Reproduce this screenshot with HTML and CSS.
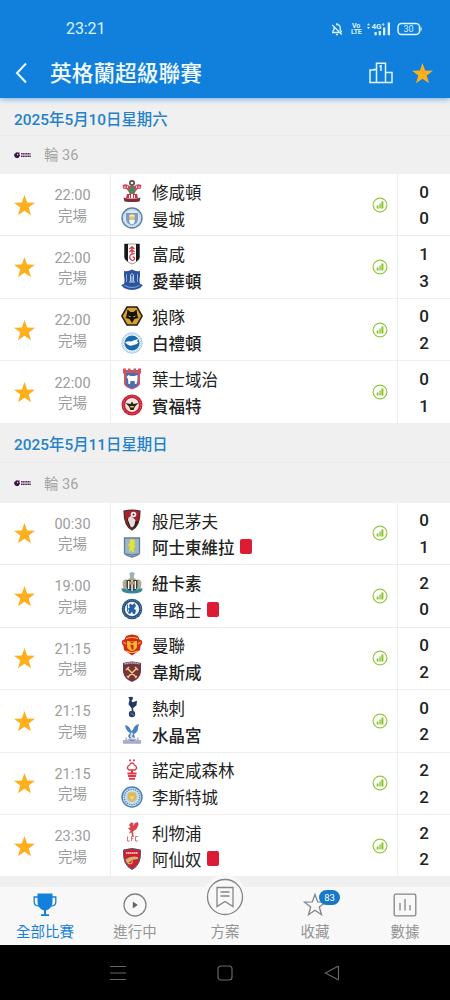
FILE: index.html
```html
<!DOCTYPE html>
<html lang="zh-Hant">
<head>
    <meta charset="utf-8">
    <meta name="viewport" content="width=device-width, initial-scale=1">
    <title>英格蘭超級聯賽</title>
    <link rel="stylesheet" href="styles.css">
</head>
<body>
    <svg class="defs">
        <symbol id="star" viewBox="0 0 20 20">
            <path d="M10 0l2.5 7.1 7.5.2-6 4.6 2.2 7.4L10 15l-6.2 4.3L6 11.9 0 7.300l7.500-.2z"/>
        </symbol>
        <symbol id="stats" viewBox="0 0 16 16">
            <circle cx="8" cy="8" r="6.900" fill="none" stroke="#92c83e" stroke-width="1.200"/>
            <path d="M4.700 8.600h1.800v3H4.700zM7.400 6.600h1.300v5H7.400zM9.400 4.400h2v7.200h-2z" fill="#84c225"/>
        </symbol>
        <symbol id="league" viewBox="0 0 18 8">
            <path d="M3 1l1 .8 1.600-.6-.3 1.600.7 2L4.300 7 2 7.100.4 5.600.1 3.300 1.800 2z" fill="#3d1149"/>
            <circle cx="3.500" cy="3.600" r=".8" fill="#c9b5cf"/>
            <path d="M7 2.700h9.500M7 5.200h10" stroke="#5b3066" stroke-width="1.500" stroke-dasharray="1.400 .3"/>
        </symbol>
    </svg>

    <div class="header">
        <div class="status-bar">
            <span class="clock">23:21</span>
            <div class="status-icons">
                <svg width="12" height="14" viewBox="0 0 12 14" fill="none" stroke="#d9f3ff" stroke-width="1.300">
                    <path d="M1 10.500h9.500M2 10V9l1-1.500V5.500M5 2.800q4-.8 4.200 3V8l1.500 2M5 12.700h2M6 1v1.500M1.200 3l9.600 9.500"/>
                </svg>
                <span class="volte">Vo<br>LTE</span>
                <svg width="24" height="14" viewBox="0 0 24 14" fill="#d9f3ff">
                    <path d="M0 3.300l1.500-2 1.500 2zM0 5l1.500 2L3 5zM7.500 10h2.200v3.300H7.500zM11.700 9h2.200v4.300h-2.200zM16 5.500h2.300v7.800H16zM20.700.5H23v12.800h-2.300z"/>
                    <text x="4.500" y="7.300" class="signal-text">4G⁺</text>
                </svg>
                <svg width="26" height="14" viewBox="0 0 26 14">
                    <rect x="1" y="1.500" width="21.500" height="11" rx="3.500" fill="none" stroke="#d9f3ff" stroke-width="1.500"/>
                    <path d="M23.500 4q2.500 3 0 6z" fill="#d9f3ff"/>
                    <text x="6.500" y="10.200" class="battery-text">30</text>
                </svg>
            </div>
        </div>
        <div class="title-bar">
            <svg class="back" width="12" height="22" viewBox="0 0 12 22" fill="none" stroke="#e9f8ff" stroke-width="2">
                <path d="M11 1.500L2 11l9 9.500"/>
            </svg>
            <h1>英格蘭超級聯賽</h1>
            <svg class="podium" width="24" height="22" viewBox="0 0 24 22" fill="none" stroke="#e2f5ff" stroke-width="1.500">
                <path d="M7.500 20.500V1.200h9v19.300M7.500 7.500H5V8H1v12.500h22V10.500h-6.500M10.500 4.500L12 3.800V9"/>
            </svg>
            <svg class="star"><use href="#star"/></svg>
        </div>
    </div>

    <div class="matches">
        <div class="date first">2025年5月10日星期六</div>
        <div class="round"><svg class="league"><use href="#league"/></svg><span>輪 36</span></div>

        <div class="match">
            <div class="fav"><svg class="star"><use href="#star"/></svg></div>
            <div class="time">22:00<br>完場</div>
            <div class="teams">
                <div class="team">
                    <svg class="crest" viewBox="0 0 22 22">
                        <circle cx="11" cy="3" r="3" fill="#5d4c40"/><circle cx="11" cy="3" r="1.300" fill="#eee"/>
                        <path d="M1.500 5q4-2 7 1h5q3-3 7-1l-1 4q-3-1-5 2l-1 3H8.500l-1-3q-2-3-5-2z" fill="#d6455a"/>
                        <path d="M4 6v2M6.500 6v2M15.500 6v2M18 6v2" stroke="#f6dfe2"/>
                        <path d="M7.500 7h7l-2 3.500h3.500l-3.500 2V14h-3v-1.500L6 10.500h3.500z" fill="#37935a"/>
                        <path d="M6 14h10l1 4.500H5z" fill="#d72c40"/><path d="M10 14h2v4h-2zM8 15h1v3H8zM13 15h1v3h-1z" fill="#fff"/>
                        <path d="M2.500 17.500q8.500 3 17 0l-1 4q-7.500 1-15 0z" fill="#713238"/>
                    </svg>
                    <span>修咸頓</span>
                </div>
                <div class="team">
                    <svg class="crest" viewBox="0 0 22 22">
                        <circle cx="11" cy="11" r="10" fill="#dce8ef" stroke="#547fa6" stroke-width="1.400"/>
                        <circle cx="11" cy="11" r="8.300" fill="none" stroke="#a4bfd6" stroke-dasharray="1 1"/>
                        <path d="M5 6h12v6q0 5-6 6.500-6-1.500-6-6.500z" fill="#7a9ec9"/>
                        <path d="M8 13q3-2 6 0l-1 3.500-2 1-2-1z" fill="#f3f6f7"/>
                        <circle cx="11" cy="10" r="3" fill="#e3c36a"/><path d="M8.500 8h5v1.500h-5z" fill="#f2eccf"/>
                    </svg>
                    <span>曼城</span>
                </div>
            </div>
            <svg class="stats"><use href="#stats"/></svg>
            <div class="score">0<br>0</div>
        </div>

        <div class="match">
            <div class="fav"><svg class="star"><use href="#star"/></svg></div>
            <div class="time">22:00<br>完場</div>
            <div class="teams">
                <div class="team">
                    <svg class="crest" viewBox="0 0 22 22">
                        <path d="M3.500 1h15v13q0 4-7.500 7-7.500-3-7.500-7z" fill="#fff" stroke="#555" stroke-width=".6"/>
                        <path d="M3.500 1h3.500v17.500q-3.500-2-3.500-4.500zM15 1h3.500v13q0 2.500-3.500 4.500z" fill="#171717"/>
                        <path d="M8.300 6L11 3.800 13.500 6M8.300 9L11 6.800 13.500 9M11 4v7M13.700 10.500q-5 .5-5 3.500t3 3.500q2-.5 2-2.500l-2-1.500" fill="none" stroke="#d8303e" stroke-width="1.200"/>
                    </svg>
                    <span>富咸</span>
                </div>
                <div class="team winner">
                    <svg class="crest" viewBox="0 0 22 22">
                        <path d="M3 2q4 1 8-1.500Q15 3 19 2v5q-1 4 0 8l3 1-3 3q-8 4-16 0l-3-3 3-1q1-4 0-8z" fill="#2c549d"/>
                        <path d="M9.500 6L11 4.500 12.500 6v6h-3zM8 13h6M9.500 8h3M9.500 10h3" fill="none" stroke="#cddcf0" stroke-width=".9"/>
                        <path d="M5.500 5v8M16.500 5v8M3.500 16.500q7.500 4 15 0" fill="none" stroke="#86a8da" stroke-width="1"/>
                    </svg>
                    <span>愛華頓</span>
                </div>
            </div>
            <svg class="stats"><use href="#stats"/></svg>
            <div class="score">1<br>3</div>
        </div>

        <div class="match">
            <div class="fav"><svg class="star"><use href="#star"/></svg></div>
            <div class="time">22:00<br>完場</div>
            <div class="teams">
                <div class="team">
                    <svg class="crest" viewBox="0 0 22 22">
                        <path d="M6 2h10l5.200 9L16 20H6L.8 11z" fill="#d8a22d" stroke="#241c16" stroke-width="1.500"/>
                        <path d="M6.500 4.500l3 2.500h3l3-2.500 1 6.500 1 2-4 1-2.500 4L8.500 14l-4-1 1-2z" fill="#17130f"/>
                        <path d="M7 10.500l3 1-1 .8zM15 10.500l-3 1 1 .8z" fill="#f1d16c"/>
                    </svg>
                    <span>狼隊</span>
                </div>
                <div class="team winner">
                    <svg class="crest" viewBox="0 0 22 22">
                        <circle cx="11" cy="11" r="10.200" fill="#f3f9fc" stroke="#a9cce4"/>
                        <circle cx="11" cy="11" r="9" fill="none" stroke="#a6c8e0" stroke-width="1.200" stroke-dasharray="1 .8"/>
                        <circle cx="11" cy="11" r="7.600" fill="#1769b1"/>
                        <path d="M4 10.500q3-2 6-1 4-2 7.500-2.500l-1.500 2 1.500 1.500q-2 2-5 2.500-4 1.500-6-.5z" fill="#fff"/>
                    </svg>
                    <span>白禮頓</span>
                </div>
            </div>
            <svg class="stats"><use href="#stats"/></svg>
            <div class="score">0<br>2</div>
        </div>

        <div class="match">
            <div class="fav"><svg class="star"><use href="#star"/></svg></div>
            <div class="time">22:00<br>完場</div>
            <div class="teams">
                <div class="team">
                    <svg class="crest" viewBox="0 0 22 22">
                        <path d="M2 .5h3v1.500h2V.5h2.500V2h3V.5H15V2h2V.5h3v4.500l-1 1v10q-1 3-8 5.500-7-2.500-8-5.500V6L2 5z" fill="#d35264"/>
                        <path d="M5 5h12v11q-1 3-6 4-5-1-6-4z" fill="#4570b4"/>
                        <path d="M5.500 9l2-2 2 1h4l3-1v5l-1 4H14l-.5-3h-4L9 16H7.500L7 11z" fill="#fff"/>
                    </svg>
                    <span>葉士域治</span>
                </div>
                <div class="team winner">
                    <svg class="crest" viewBox="0 0 22 22">
                        <circle cx="11" cy="11" r="8.700" fill="#efe7df" stroke="#c81f32" stroke-width="3.600"/>
                        <circle cx="11" cy="11" r="8.800" fill="none" stroke="#dd8790" stroke-width=".9" stroke-dasharray="1 1"/>
                        <path d="M4.500 9l5 1L11 7.500l1.500 2.500 5-1-3.500 3.500-1.500 3.500h-3L8 12.500z" fill="#24201d"/>
                        <path d="M9 12h4l-.5 1.500h-3z" fill="#f3c63e"/>
                    </svg>
                    <span>賓福特</span>
                </div>
            </div>
            <svg class="stats"><use href="#stats"/></svg>
            <div class="score">0<br>1</div>
        </div>

        <div class="date">2025年5月11日星期日</div>
        <div class="round"><svg class="league"><use href="#league"/></svg><span>輪 36</span></div>

        <div class="match">
            <div class="fav"><svg class="star"><use href="#star"/></svg></div>
            <div class="time">00:30<br>完場</div>
            <div class="teams">
                <div class="team">
                    <svg class="crest" viewBox="0 0 22 22">
                        <path d="M3 2q8-2 16 0 0 15-8 19Q3 17 3 2z" fill="#a9202c" stroke="#422d2b" stroke-width="1.200"/>
                        <path d="M12 12h5q-1 5-6 8zM6 10l4-2v11q-3-2-4-9z" fill="#241d1e"/>
                        <circle cx="12.500" cy="5.500" r="2.800" fill="#f5eeee"/><circle cx="12.500" cy="5.500" r=".9" fill="#222"/>
                        <path d="M7 11q0-3 3-4l4.500 4-1 5-2 2.500-2-1z" fill="#e5dcdb"/>
                    </svg>
                    <span>般尼茅夫</span>
                </div>
                <div class="team winner">
                    <svg class="crest" viewBox="0 0 22 22">
                        <path d="M3.500 2h15v15.500q-1 2-7.500 3.500-6.500-1.500-7.500-3.500z" fill="#9fb6c4" stroke="#657e9d" stroke-width="1.300"/>
                        <path d="M9 3.500h4l1 3.500-1 2 1.500 1-2 3 1 3h-2l-1-2-1.500 2-1-1 1-4-2-2 2-2z" fill="#e5e52b"/>
                        <path d="M5 18q6 2 12 0" stroke="#526f9d" fill="none"/>
                    </svg>
                    <span>阿士東維拉</span><i class="red-card"></i>
                </div>
            </div>
            <svg class="stats"><use href="#stats"/></svg>
            <div class="score">0<br>1</div>
        </div>

        <div class="match">
            <div class="fav"><svg class="star"><use href="#star"/></svg></div>
            <div class="time">19:00<br>完場</div>
            <div class="teams">
                <div class="team winner">
                    <svg class="crest" viewBox="0 0 22 22">
                        <path d="M8.500 1l2.500-1 3 1-1 2v3H9z" fill="#9db5ae"/>
                        <path d="M1.500 10q2-4 5-2l2-2h5l2 2q3-2 5 2l-1 8h-17z" fill="#b0ab92"/>
                        <path d="M5.500 8h11v7q-1 4-5.500 5.500Q6.500 19 5.500 15z" fill="#3c4347"/>
                        <path d="M7 9h1.300v8H7zM10.300 8h1.500v12h-1.500zM13.600 9H15v8h-1.400z" fill="#f5f5f0"/>
                        <path d="M8.500 9.500h5v3h-5z" fill="#c9966a"/>
                        <path d="M0 16.500q4-.5 5.500 1 5.500 2.500 11 0 1.500-1.500 5.500-1l-2 3.500q-9 3-18 0z" fill="#3387a0"/>
                    </svg>
                    <span>紐卡素</span>
                </div>
                <div class="team">
                    <svg class="crest" viewBox="0 0 22 22">
                        <circle cx="11" cy="11" r="10.300" fill="#234d7c"/>
                        <circle cx="11" cy="11" r="8.900" fill="none" stroke="#a9bfcb" stroke-width=".8" stroke-dasharray="1 1.200"/>
                        <circle cx="11" cy="11" r="7.200" fill="#f1f6fa"/>
                        <path d="M9 5.500l2.500 1.500L13.500 5l1.500 3-2 2.500 2 2-1 3.500h-2l-1-2.500L9 16l-2-1 1-2.500-1-2 2-1-1-1.500z" fill="#2460a8"/>
                        <path d="M6.500 6.500v7" stroke="#2460a8" stroke-width=".9"/>
                    </svg>
                    <span>車路士</span><i class="red-card"></i>
                </div>
            </div>
            <svg class="stats"><use href="#stats"/></svg>
            <div class="score">2<br>0</div>
        </div>

        <div class="match">
            <div class="fav"><svg class="star"><use href="#star"/></svg></div>
            <div class="time">21:15<br>完場</div>
            <div class="teams">
                <div class="team">
                    <svg class="crest" viewBox="0 0 22 22">
                        <path d="M5 2q6-3 12 0l1.500 3.500q3.500.5 2.500 4-2 2-2 6.500l-8 5.500L3 16q0-4.500-2-6.500-1-3.500 2.500-4z" fill="#d1291f"/>
                        <path d="M5 4.500q6-2 12 0M5 17q6 3 12 0M2.500 8l2.500 2M19.500 8L17 10" fill="none" stroke="#f6bd2e" stroke-width="1.200"/>
                        <path d="M6 7h10v6q-1 3-5 4-4-1-5-4z" fill="#f6b72b"/>
                        <path d="M8 7.500h6l-3 2zM9 10.500l3.500.5v4l-1.500 1-1-3z" fill="#c52a1c"/>
                    </svg>
                    <span>曼聯</span>
                </div>
                <div class="team winner">
                    <svg class="crest" viewBox="0 0 22 22">
                        <path d="M2 2q9-3 18 0v9q-1 7-9 10-8-3-9-10z" fill="#76323f"/>
                        <path d="M3.500 2.800q7.500-1.800 15 0" fill="none" stroke="#a7bcd0" stroke-width="1.500" stroke-dasharray="1.500 .5"/>
                        <path d="M6 7l9 9M16 7l-9 9M5 9l3-3M14 6l3 3M6 15l2 2M14 17l2-2" stroke="#eccc79" stroke-width="1.500"/>
                    </svg>
                    <span>韋斯咸</span>
                </div>
            </div>
            <svg class="stats"><use href="#stats"/></svg>
            <div class="score">0<br>2</div>
        </div>

        <div class="match">
            <div class="fav"><svg class="star"><use href="#star"/></svg></div>
            <div class="time">21:15<br>完場</div>
            <div class="teams">
                <div class="team">
                    <svg class="crest" viewBox="0 0 22 22">
                        <path d="M8.500 1l3-.3.500 2-1.500 2 1 1.500 4.500-1.500-.5 4.500-3.500 3 .5 3h-1.500l-.5-3-3-4 1-4-.5-2-1-.5z" fill="#233867"/>
                        <circle cx="11" cy="18" r="3.200" fill="#283e70"/><path d="M9.500 17l3.500 2" stroke="#8794ae" stroke-width=".8"/>
                    </svg>
                    <span>熱刺</span>
                </div>
                <div class="team winner">
                    <svg class="crest" viewBox="0 0 22 22">
                        <path d="M4 2q5 1 6 6l2-1q1-5 6-6l-1 4q0 4-4 6l1 4-3-1-2 2-2-3 2-3Q5 8 4 2z" fill="#4a80bc"/>
                        <path d="M10 9l2 1-1 5-2-1z" fill="#d2e1ee"/>
                        <path d="M2 17h4l2-1.500h6l2 1.500h4v2.500H2zM4.500 14.500H6V20H4.500zM16 14.500h1.500V20H16z" fill="#a9b1c8"/>
                        <path d="M2 20h18M9 17.500h4" stroke="#7a82a5"/>
                    </svg>
                    <span>水晶宮</span>
                </div>
            </div>
            <svg class="stats"><use href="#stats"/></svg>
            <div class="score">0<br>2</div>
        </div>

        <div class="match">
            <div class="fav"><svg class="star"><use href="#star"/></svg></div>
            <div class="time">21:15<br>完場</div>
            <div class="teams">
                <div class="team">
                    <svg class="crest" viewBox="0 0 22 22">
                        <path d="M9 .5v1.800M13 .5v1.800" stroke="#df3745" stroke-width="1.800"/>
                        <path d="M11 4Q9 4 8.700 6 6 7 6.500 9.500L8 11h6l1.500-1.500Q16 7 13.300 6 13 4 11 4z" fill="#fff" stroke="#df3745" stroke-width="1.300"/>
                        <path d="M11 11v4" stroke="#df3745" stroke-width="2"/>
                        <path d="M6.500 14.500h9M7 17h8M8 19.700h6" stroke="#df3745" stroke-width="2"/>
                    </svg>
                    <span>諾定咸森林</span>
                </div>
                <div class="team">
                    <svg class="crest" viewBox="0 0 22 22">
                        <circle cx="11" cy="11" r="10" fill="#d4e3ed" stroke="#4a82b8" stroke-width="1.500"/>
                        <circle cx="11" cy="11" r="7.700" fill="none" stroke="#5c8cbd" stroke-width="1.500" stroke-dasharray="1.300 1"/>
                        <circle cx="11" cy="11" r="5.600" fill="#b8cbd2"/>
                        <path d="M7 6.500l3 .5 1-1 1 1 3-.5v6L13 15l-2 1-2-1-2-2.500z" fill="#ddba53"/>
                        <path d="M9 9.500l2 1 2-1-1 4h-2z" fill="#ecd98a"/>
                    </svg>
                    <span>李斯特城</span>
                </div>
            </div>
            <svg class="stats"><use href="#stats"/></svg>
            <div class="score">2<br>2</div>
        </div>

        <div class="match">
            <div class="fav"><svg class="star"><use href="#star"/></svg></div>
            <div class="time">23:30<br>完場</div>
            <div class="teams">
                <div class="team">
                    <svg class="crest" viewBox="0 0 22 22">
                        <path d="M8 4l2-2.500 2.500.5-.5 3 2-3 3-1 .5 3-2 4-3.500 2.500.5 4.500H11l-.5-3.500-2.500 1 1.500-3L7 7.500 9.500 6z" fill="#d94450"/>
                        <path d="M6.500 15.500V20H9M10.500 20v-4.500h2.500M10.500 17.700h2M17 15.500h-2.500V20H17" fill="none" stroke="#dd6f79"/>
                    </svg>
                    <span>利物浦</span>
                </div>
                <div class="team">
                    <svg class="crest" viewBox="0 0 22 22">
                        <path d="M2.500 2q8.500-3 17 0 1 15-8.500 19.500Q1.500 17 2.500 2z" fill="#ce2033" stroke="#4c5577"/>
                        <path d="M5 5h12" stroke="#f4e8e4" stroke-width="1.700" stroke-dasharray="1.500 .4"/>
                        <path d="M4.500 11.500q5-4 12.500-2.500v2l-6.500 1-1.500 2-3 1z" fill="#d8b367"/>
                        <circle cx="9" cy="13.500" r="2.300" fill="none" stroke="#d8b367" stroke-width="1.100"/>
                    </svg>
                    <span>阿仙奴</span><i class="red-card"></i>
                </div>
            </div>
            <svg class="stats"><use href="#stats"/></svg>
            <div class="score">2<br>2</div>
        </div>
    </div>

    <div class="tab-bar">
        <a class="tab active">
            <svg width="24" height="26" viewBox="0 0 24 26">
                <path d="M4.500 1.500h15v8q0 7-6.500 9v3.800h3V24H8v-1.700h3v-3.800q-6.500-2-6.500-9z" fill="#1480da"/>
                <path d="M5 5H1.200v5q0 4 5 4M19 5h3.800v5q0 4-5 4" fill="none" stroke="#1480da" stroke-width="1.300"/>
            </svg>
            全部比賽
        </a>
        <a class="tab">
            <svg width="24" height="26" viewBox="0 0 24 26">
                <circle cx="12" cy="13" r="11" fill="none" stroke="#858585" stroke-width="1.300"/>
                <path d="M9.800 9.500v7l5-3.500z" fill="#666"/>
            </svg>
            進行中
        </a>
        <a class="tab plan">
            <svg width="44" height="44" viewBox="0 0 44 44" fill="none" stroke="#858585" stroke-width="1.300">
                <circle cx="22" cy="22" r="22" fill="#f8f8f8" stroke="none"/>
                <circle cx="22" cy="22" r="17.500"/>
                <path d="M14 12.500h16v19l-8-5-8 5zM17.500 17h9M17.500 21h9"/>
            </svg>
            方案
        </a>
        <a class="tab">
            <svg width="24" height="26" viewBox="0 0 24 26" fill="none" stroke="#858585" stroke-width="1.300">
                <path d="M12 2.500l2.700 7.400 7.800.3-6.200 4.800 2.200 7.800-6.500-4.500-6.500 4.500 2.200-7.800-6.200-4.800 7.800-.3z"/>
            </svg>
            收藏
            <span class="badge">83</span>
        </a>
        <a class="tab">
            <svg width="24" height="26" viewBox="0 0 24 26" fill="none" stroke="#858585" stroke-width="1.300">
                <rect x="1.200" y="2.200" width="21.600" height="21.600" rx="1.500"/>
                <path d="M7 11v7.500M12 7v11.500M17 13v5.500"/>
            </svg>
            數據
        </a>
    </div>

    <div class="nav-bar">
        <svg width="16" height="16" viewBox="0 0 16 16"><path d="M0 1.500h16M0 8h16M0 14.500h16"/></svg>
        <svg width="16" height="16" viewBox="0 0 16 16"><rect x="1" y="1" width="14" height="14" rx="3"/></svg>
        <svg width="16" height="16" viewBox="0 0 16 16"><path d="M14.500 2v12q0 1-1 .5L1.500 8l12-6.500q1-.5 1 .5z"/></svg>
    </div>
</body>
</html>
```

FILE: styles.css
```css
* {
    box-sizing: border-box;
}

body {
    margin: 0;
    width: 450px;
    height: 1000px;
    display: flex;
    flex-direction: column;
    overflow: hidden;
    background-color: #f0f0f0;
    font-family: Roboto, "Noto Sans CJK TC", sans-serif;
    color: #222;
}

svg {
    display: block;
    flex-shrink: 0;
}

.defs {
    position: absolute;
    width: 0;
    height: 0;
}

/* header */
.header {
    position: relative;
    flex: none;
    height: 98px;
    background-color: #1080dc;
    box-shadow: 0 1px 6px #1080dc99;
}

.status-bar {
    display: flex;
    justify-content: space-between;
    align-items: center;
    height: 48px;
    padding: 10px 27px 0 66px;
    color: #d9f3ff;
}

.clock {
    padding-bottom: 1px;
    font-size: 16px;
    letter-spacing: -0.1px;
}

.status-icons {
    display: flex;
    align-items: center;
}

.volte {
    width: 10px;
    margin: 0 6px 0 8px;
    font-size: 7px;
    line-height: 6.500px;
    font-weight: 700;
    letter-spacing: -0.3px;
    text-align: center;
}

.status-icons svg + svg {
    margin-left: 6px;
}

.signal-text {
    font-size: 8px;
    font-weight: 700;
}

.battery-text {
    font-size: 9px;
    fill: #d9f3ff;
}

.title-bar {
    display: flex;
    align-items: center;
    height: 50px;
    padding: 0 17px 0 15px;
}

.title-bar h1 {
    flex: 1;
    margin: 2px 0 0 23px;
    font-size: 21.700px;
    line-height: 28px;
    font-weight: 500;
    color: #f0faff;
}

.podium {
    margin-right: 19px;
}

.star {
    width: 21px;
    height: 21px;
    fill: #fdb01c;
}

/* match list */
.matches {
    flex: 1;
    min-height: 0;
}

.date {
    height: 39px;
    padding: 0 14px;
    border-bottom: 1px solid #ebebeb;
    font-size: 15.400px;
    line-height: 43px;
    font-weight: 500;
    color: #2482cb;
}

.date.first {
    height: 38px;
    line-height: 45px;
}

.round {
    display: flex;
    align-items: center;
    height: 38px;
    padding-left: 14px;
    font-size: 14.500px;
    color: #a5a5a5;
}

.date.first + .round span {
    margin-top: -3px;
}

.date:not(.first) + .round {
    height: 40px;
}

.league {
    width: 18px;
    height: 8px;
    margin-right: 12px;
}

.match {
    display: flex;
    height: 62.450px;
    background-color: #fff;
    border-bottom: 1px solid #efefef;
}

.fav {
    display: flex;
    align-items: center;
    justify-content: center;
    width: 48px;
    padding-top: 1px;
}

.time {
    width: 49px;
    padding-top: 12.200px;
    font-size: 14.500px;
    line-height: 20.500px;
    color: #9c9c9c;
    text-align: center;
}

.teams {
    flex: 1;
    margin-left: 13px;
    padding: 4px 0 0 10px;
    border-left: 1px solid #eee;
}

.team {
    display: flex;
    align-items: center;
    height: 26.700px;
    font-size: 16.500px;
}

.team span {
    padding-top: 1px;
}

.winner {
    font-weight: 500;
}

.crest {
    width: 22px;
    height: 22px;
    margin-right: 9px;
}

.red-card {
    width: 12px;
    height: 15px;
    margin-left: 5px;
    border-radius: 2px;
    background-color: #dc1c34;
}

.stats {
    width: 16px;
    height: 16px;
    align-self: center;
    margin-right: 9px;
}

.score {
    width: 53px;
    padding-top: 4.600px;
    border-left: 1px solid #eee;
    font-size: 17px;
    line-height: 26.700px;
    font-weight: 500;
    text-align: center;
}

/* bottom tabs */
.tab-bar {
    display: flex;
    flex: none;
    height: 58px;
    background-color: #f8f8f8;
}

.tab {
    position: relative;
    flex: 1;
    display: flex;
    flex-direction: column;
    align-items: center;
    padding-top: 5px;
    font-size: 14.500px;
    line-height: 30px;
    color: #949494;
}

.tab.active {
    color: #1480da;
}

.plan svg {
    margin: -17px 0 -1px;
}

.badge {
    position: absolute;
    top: 3px;
    left: 49px;
    width: 21px;
    height: 15px;
    border-radius: 8px;
    background-color: #1878c8;
    color: #fff;
    font-size: 9.500px;
    line-height: 15px;
    text-align: center;
}

/* android navigation */
.nav-bar {
    display: flex;
    flex: none;
    align-items: center;
    justify-content: center;
    gap: 91px;
    height: 55px;
    background-color: #000;
}

.nav-bar svg {
    fill: none;
    stroke: #666;
    stroke-width: 1.200;
}
```
